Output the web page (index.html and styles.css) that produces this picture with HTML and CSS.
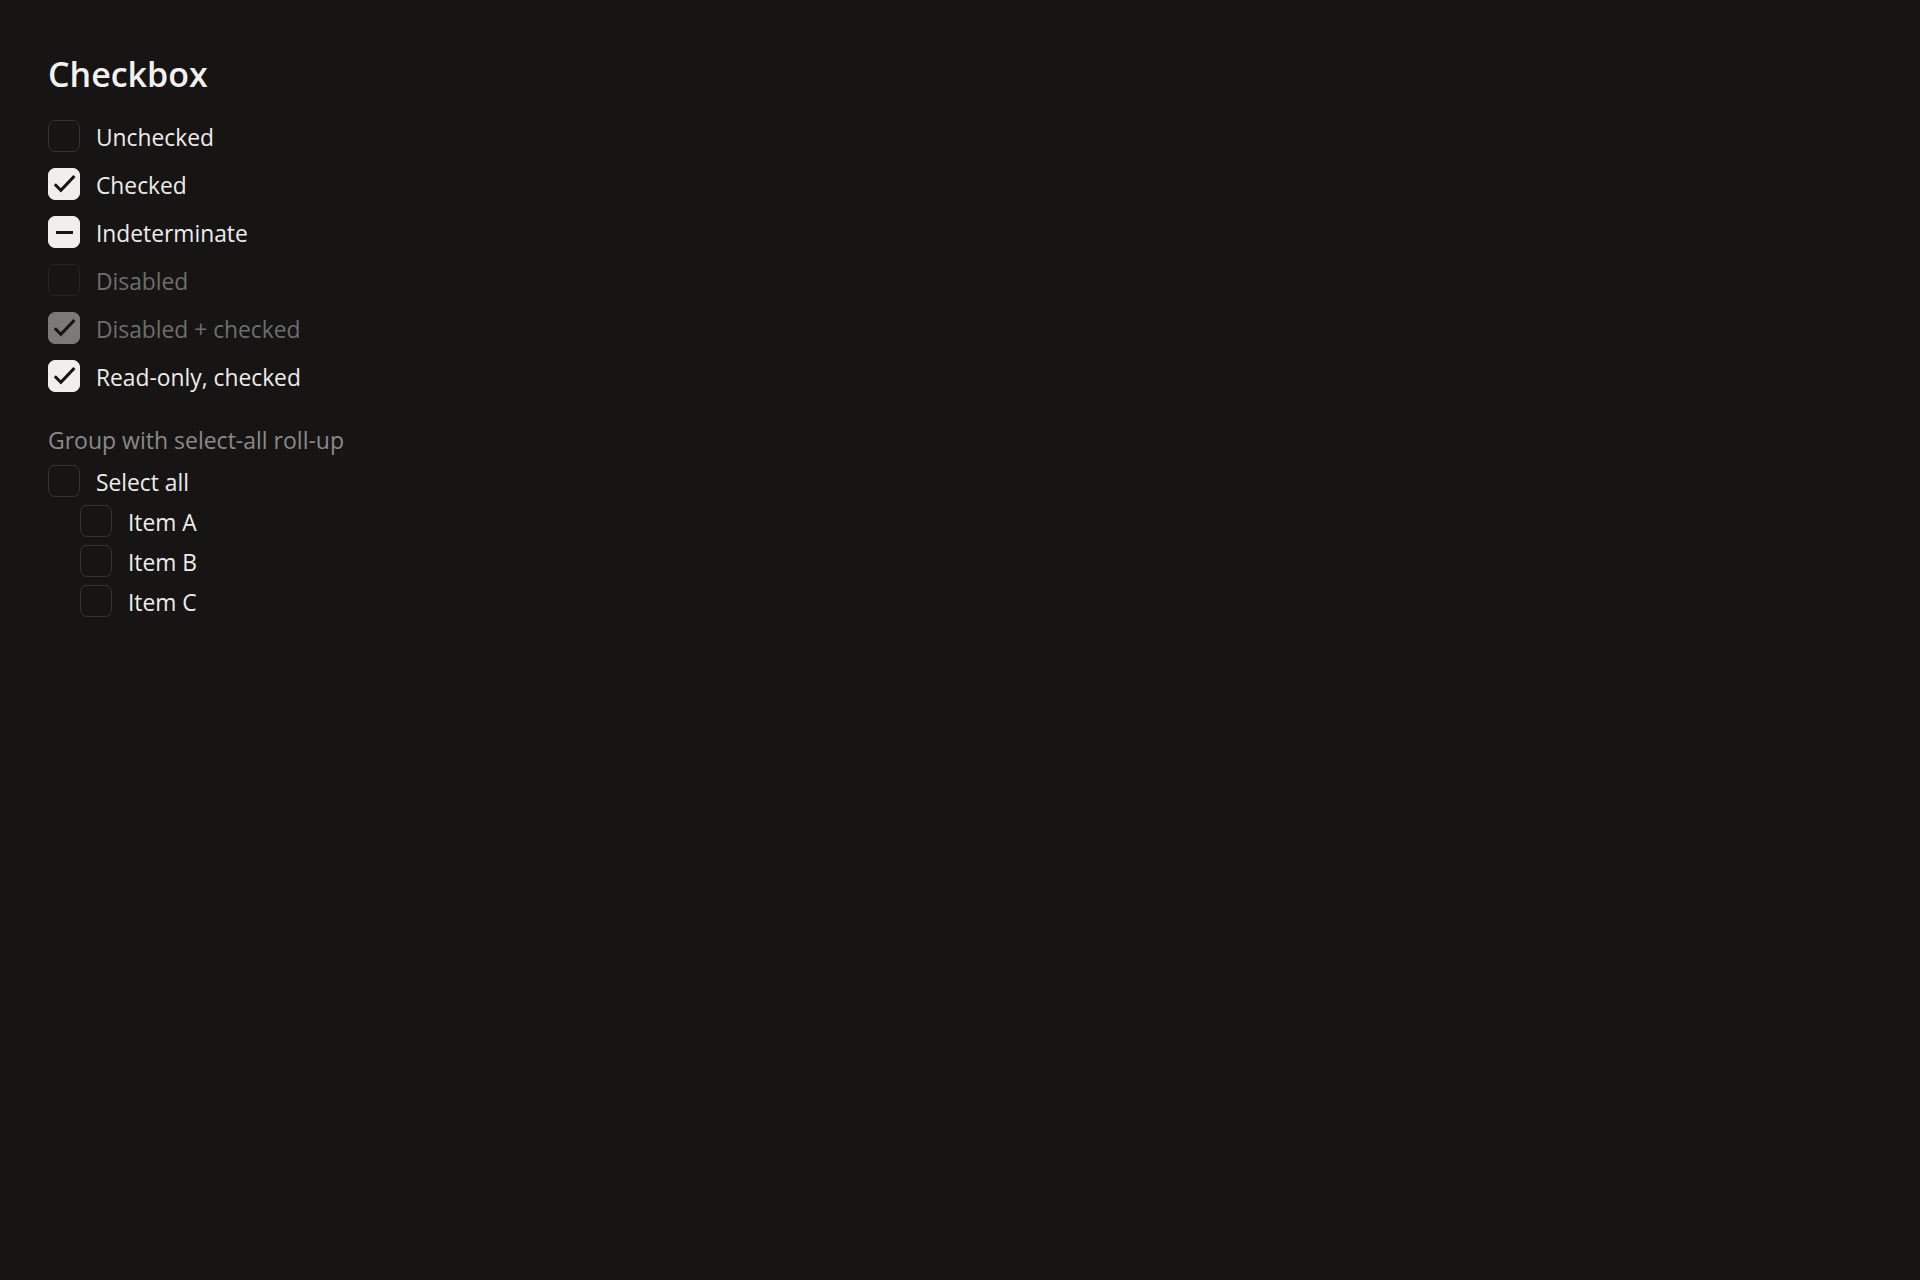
FILE: index.html
```html
<!DOCTYPE html>
<html>
<head>
<meta charset="utf-8">
<link rel="stylesheet" href="styles.css">
</head>
<body>
<main class="page">
  <h1 class="title">Checkbox</h1>
  <div class="list">
    <label class="row"><span class="box"></span><span class="label">Unchecked</span></label>
    <label class="row"><span class="box on"><svg viewBox="0 0 24 24"><polyline points="19.5 6.5 9.5 17 5.5 13"/></svg></span><span class="label">Checked</span></label>
    <label class="row"><span class="box on"><span class="dash"></span></span><span class="label">Indeterminate</span></label>
    <label class="row disabled"><span class="box"></span><span class="label">Disabled</span></label>
    <label class="row disabled"><span class="box on"><svg viewBox="0 0 24 24"><polyline points="19.5 6.5 9.5 17 5.5 13"/></svg></span><span class="label">Disabled + checked</span></label>
    <label class="row"><span class="box on"><svg viewBox="0 0 24 24"><polyline points="19.5 6.5 9.5 17 5.5 13"/></svg></span><span class="label">Read-only, checked</span></label>
  </div>
  <div class="group-title">Group with select-all roll-up</div>
  <div class="group">
    <label class="row"><span class="box"></span><span class="label">Select all</span></label>
    <div class="sub">
      <label class="row"><span class="box"></span><span class="label">Item A</span></label>
      <label class="row"><span class="box"></span><span class="label">Item B</span></label>
      <label class="row"><span class="box"></span><span class="label">Item C</span></label>
    </div>
  </div>
</main>
</body>
</html>
```
FILE: styles.css
```css
html, body {
  margin: 0;
  background: #161514;
}
body {
  font-family: "Open Sans", "Noto Sans", sans-serif;
  color: #edecea;
}
.page {
  padding: 54px 48px;
}
.title {
  margin: 0;
  font-size: 34px;
  line-height: 40px;
  font-weight: 600;
  color: #f2f1ef;
}
.list {
  margin-top: 26px;
  display: flex;
  flex-direction: column;
  gap: 16px;
}
.row {
  display: flex;
  align-items: center;
  gap: 16px;
  height: 32px;
  font-size: 22.8px;
}
.label {
  padding-top: 2px;
}
.box {
  box-sizing: border-box;
  width: 32px;
  height: 32px;
  flex: none;
  border: 1.5px solid #343331;
  border-radius: 7px;
  display: flex;
  align-items: center;
  justify-content: center;
}
.box.on {
  background: #f0efed;
  border-color: #f0efed;
}
.box svg {
  width: 30px;
  height: 30px;
  fill: none;
  stroke: #161514;
  stroke-width: 2.4;
  stroke-linecap: square;
  stroke-linejoin: miter;
}
.dash {
  width: 17px;
  height: 3px;
  background: #161514;
}
.row.disabled .label {
  color: #6f6e6c;
}
.row.disabled .box {
  border-color: #252423;
}
.row.disabled .box.on {
  background: #7b7a78;
  border-color: #7b7a78;
}
.group-title {
  margin-top: 33px;
  font-size: 23px;
  line-height: 30px;
  color: #8a8987;
}
.group {
  margin-top: 10px;
  display: flex;
  flex-direction: column;
  gap: 8px;
}
.sub {
  padding-left: 32px;
  display: flex;
  flex-direction: column;
  gap: 8px;
}
```
